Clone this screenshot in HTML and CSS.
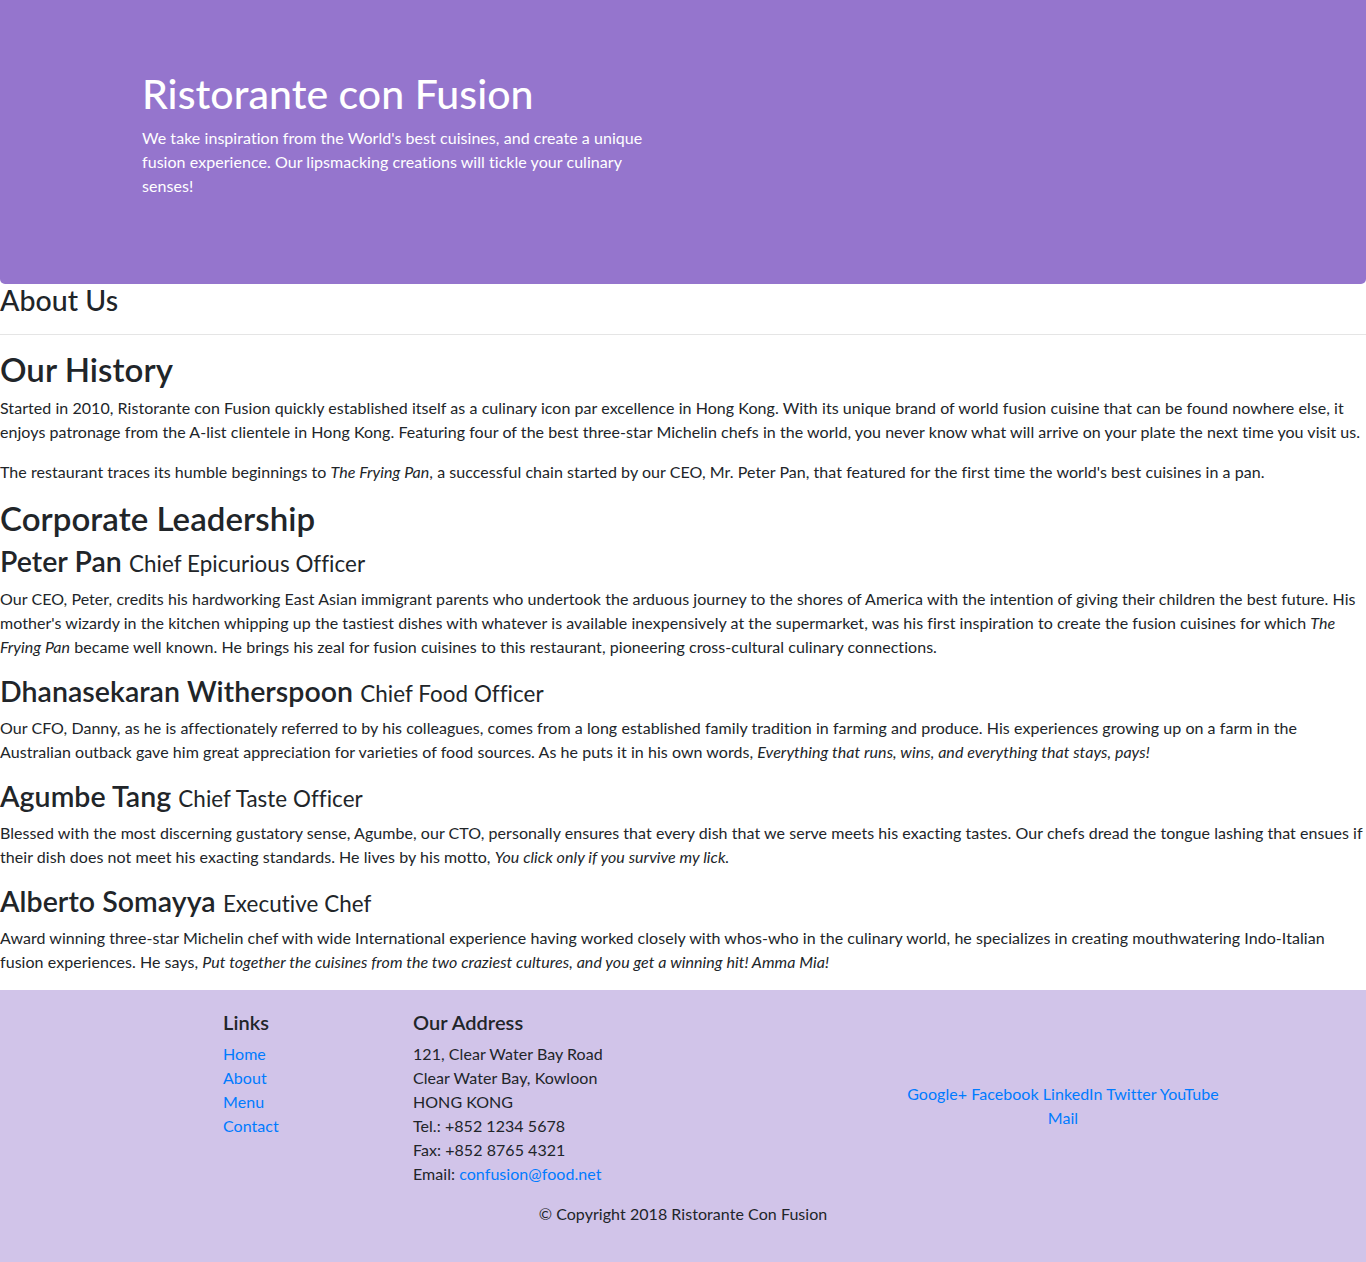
FILE: index.html
```html
<!DOCTYPE html>
<html lang="en">
<head>
<meta charset="utf-8">
<title>Ristorante con Fusion: About Us</title>
<link rel="stylesheet" href="styles.css">
</head>
<body>
<header class="jumbotron">
  <div class="jumbo-col">
    <h1 class="jumbo-title">Ristorante con Fusion</h1>
    <p class="jumbo-text">We take inspiration from the World's best cuisines, and create a unique fusion experience. Our lipsmacking creations will tickle your culinary senses!</p>
  </div>
</header>

<main class="content">
  <h3 class="page-title">About Us</h3>
  <hr class="divider">

  <h2 class="section-title">Our History</h2>
  <p>Started in 2010, Ristorante con Fusion quickly established itself as a culinary icon par excellence in Hong Kong. With its unique brand of world fusion cuisine that can be found nowhere else, it enjoys patronage from the A-list clientele in Hong Kong. Featuring four of the best three-star Michelin chefs in the world, you never know what will arrive on your plate the next time you visit us.</p>
  <p>The restaurant traces its humble beginnings to <em>The Frying Pan</em>, a successful chain started by our CEO, Mr. Peter Pan, that featured for the first time the world's best cuisines in a pan.</p>

  <h2 class="section-title">Corporate Leadership</h2>

  <h3 class="leader-name">Peter Pan <small>Chief Epicurious Officer</small></h3>
  <p>Our CEO, Peter, credits his hardworking East Asian immigrant parents who undertook the arduous journey to the shores of America with the intention of giving their children the best future. His mother's wizardy in the kitchen whipping up the tastiest dishes with whatever is available inexpensively at the supermarket, was his first inspiration to create the fusion cuisines for which <em>The Frying Pan</em> became well known. He brings his zeal for fusion cuisines to this restaurant, pioneering cross-cultural culinary connections.</p>

  <h3 class="leader-name">Dhanasekaran Witherspoon <small>Chief Food Officer</small></h3>
  <p>Our CFO, Danny, as he is affectionately referred to by his colleagues, comes from a long established family tradition in farming and produce. His experiences growing up on a farm in the Australian outback gave him great appreciation for varieties of food sources. As he puts it in his own words, <em>Everything that runs, wins, and everything that stays, pays!</em></p>

  <h3 class="leader-name">Agumbe Tang <small>Chief Taste Officer</small></h3>
  <p>Blessed with the most discerning gustatory sense, Agumbe, our CTO, personally ensures that every dish that we serve meets his exacting tastes. Our chefs dread the tongue lashing that ensues if their dish does not meet his exacting standards. He lives by his motto, <em>You click only if you survive my lick.</em></p>

  <h3 class="leader-name">Alberto Somayya <small>Executive Chef</small></h3>
  <p>Award winning three-star Michelin chef with wide International experience having worked closely with whos-who in the culinary world, he specializes in creating mouthwatering Indo-Italian fusion experiences. He says, <em>Put together the cuisines from the two craziest cultures, and you get a winning hit! Amma Mia!</em></p>
</main>

<footer class="footer">
  <div class="footer-inner">
    <div class="footer-row">
      <div class="col-links">
        <h5 class="footer-title">Links</h5>
        <ul class="link-list">
          <li><a href="#">Home</a></li>
          <li><a href="#">About</a></li>
          <li><a href="#">Menu</a></li>
          <li><a href="#">Contact</a></li>
        </ul>
      </div>
      <div class="col-address">
        <h5 class="footer-title">Our Address</h5>
        <address class="address">
          121, Clear Water Bay Road<br>
          Clear Water Bay, Kowloon<br>
          HONG KONG<br>
          Tel.: +852 1234 5678<br>
          Fax: +852 8765 4321<br>
          Email: <a href="#">confusion@food.net</a>
        </address>
      </div>
      <div class="col-social">
        <div class="social">
          <a href="#">Google+</a>
          <a href="#">Facebook</a>
          <a href="#">LinkedIn</a>
          <a href="#">Twitter</a>
          <a href="#">YouTube</a>
          <a href="#">Mail</a>
        </div>
      </div>
    </div>
    <div class="copyright-row">
      <p class="copyright">© Copyright 2018 Ristorante Con Fusion</p>
    </div>
  </div>
</footer>
</body>
</html>
```

FILE: styles.css
```css
* { box-sizing: border-box; }

html, body {
  margin: 0;
  padding: 0;
}

body {
  font-family: "Lato", "Open Sans", sans-serif;
  font-size: 16px;
  line-height: 24px;
  letter-spacing: 0.05px;
  color: #212529;
  background: #ffffff;
}

a {
  color: #007bff;
  text-decoration: none;
}

h1, h2, h3, h5 {
  margin: 0 0 8px 0;
  font-weight: 600;
  line-height: 1.2;
}

p {
  margin: 0 0 16px 0;
}

/* Jumbotron */
.jumbotron {
  background: #9575cd;
  color: #ffffff;
  padding: 70px 0 70px 142px;
  border-radius: 0 0 5px 5px;
}

.jumbo-col {
  width: 515px;
}

.jumbo-title {
  font-size: 41px;
  line-height: 48px;
  font-weight: 500;
}

.jumbo-text {
  margin: 0 0 16px 0;
}

/* Main content */
.page-title {
  font-size: 28.5px;
  line-height: 33.6px;
  margin: 0 0 8px 0;
  font-weight: 500;
}

.divider {
  margin: 16px 0;
  border: 0;
  border-top: 1px solid rgba(0, 0, 0, 0.1);
  height: 0;
}

.section-title {
  font-size: 33px;
  line-height: 37.4px;
}

.leader-name {
  font-size: 28.5px;
  line-height: 1.18;
  margin-bottom: 7.5px;
}

.leader-name small {
  font-size: 22.4px;
  font-weight: 400;
}

/* Footer */
.footer {
  background: #d1c4e9;
  padding: 20px 0;
}

.footer-inner {
  width: 1140px;
  margin: 0 auto;
}

.footer-row {
  display: flex;
  padding-left: 95px;
}

.col-links {
  width: 190px;
  padding: 0 15px;
}

.col-address {
  width: 475px;
  padding: 0 15px;
}

.col-social {
  width: 380px;
  padding: 0 15px;
  align-self: center;
}

.footer-title {
  font-size: 20px;
  line-height: 24px;
}

.link-list {
  list-style: none;
  margin: 0;
  padding: 0;
}

.address {
  font-style: normal;
  margin: 0 0 16px 0;
}

.social {
  max-width: 330px;
  margin: 0 auto;
  text-align: center;
}

.copyright-row {
  display: flex;
  justify-content: center;
}

.copyright {
  margin: 0 0 16px 0;
}
```
